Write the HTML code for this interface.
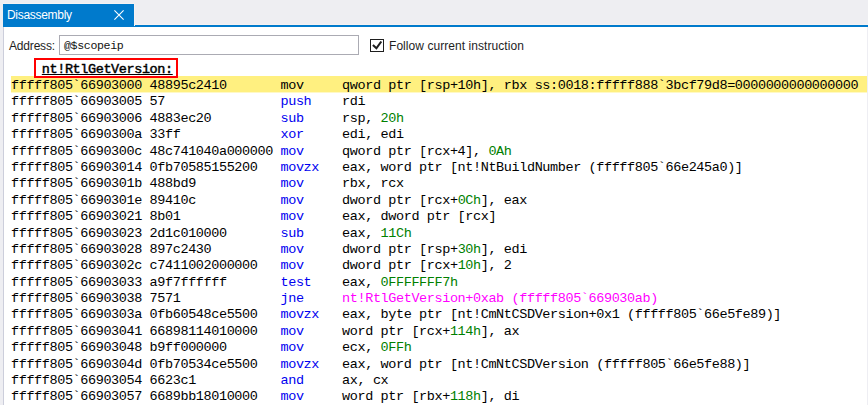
<!DOCTYPE html>
<html lang="en">
<head>
<meta charset="utf-8">
<title>Disassembly</title>
<style>
html,body{margin:0;padding:0;}
body{width:868px;height:405px;overflow:hidden;background:#eeeef2;position:relative;font-family:"Liberation Sans",sans-serif;font-size:12px;color:#1e1e1e;font-variant-ligatures:none;}
.tab{position:absolute;left:3px;top:4px;width:131px;height:22px;background:#007acc;color:#fff;z-index:2;box-shadow:1px 0 0 #f5f2f3,0 -1px 0 #f5f2f3;}
.tab .t{position:absolute;left:4px;top:4px;font-size:12px;line-height:14px;white-space:nowrap;letter-spacing:-0.3px;}
.tab svg{position:absolute;left:111px;top:6px;}
.bar{position:absolute;left:3px;top:25px;width:865px;height:2px;background:#007acc;box-shadow:0 -1px 0 #f5f2f3;}
.panel{position:absolute;left:3px;top:27px;width:865px;height:378px;background:#fff;border-left:1px solid #cccedb;border-right:1px solid #eeeef3;box-sizing:border-box;}
.lbl{position:absolute;left:9px;top:39px;line-height:14px;white-space:nowrap;letter-spacing:-0.18px;}
.inp{position:absolute;left:59px;top:35px;width:300px;height:20px;box-sizing:border-box;border:1px solid #ababb3;background:#fff;}
.inp span{position:absolute;left:4px;top:3px;font-family:"Liberation Mono",monospace;font-size:11.6px;letter-spacing:-0.36px;line-height:14px;white-space:pre;color:#111;}
.cb{position:absolute;left:370px;top:39px;width:14px;height:13px;box-sizing:border-box;border:1px solid #1e1e1e;background:#fff;}
.cb svg{position:absolute;left:0;top:0;}
.fol{position:absolute;left:389px;top:39px;line-height:14px;white-space:nowrap;letter-spacing:0.06px;}
.code{font-family:"Liberation Mono",monospace;font-size:13.5px;letter-spacing:-0.4px;white-space:pre;color:#000;}
.sym{position:absolute;left:41.8px;top:61.6px;height:16.39px;line-height:16.39px;font-weight:normal;-webkit-text-stroke:0.45px #000;text-decoration:underline;text-decoration-thickness:1.4px;}
.red{position:absolute;left:34px;top:58px;width:144px;height:19.6px;box-sizing:border-box;border:2px solid #f00;z-index:5;}
.r{position:absolute;left:11px;width:856px;height:16.39px;line-height:16.39px;font-family:"Liberation Mono",monospace;font-size:13.5px;letter-spacing:-0.4px;white-space:pre;color:#000;}
.r.cur{height:17px;background:linear-gradient(#fff080 0,#fff080 16px,#fff9c6 16px,#fff9c6 17px);}
.r span{position:absolute;top:2px;}
.r .a{left:0;}
.r .m{left:269.5px;color:#0000f0;}
.r .o{left:331.1px;}
.r .o span{position:static;}
.r.cur .m{color:#000;}
.n{color:#008000;}
.j{color:#ff00ff;}
</style>
</head>
<body>
<div class="tab"><span class="t">Disassembly</span><svg width="10" height="10" viewBox="0 0 10 10"><path d="M0.4 0.4L9.6 9.6M9.6 0.4L0.4 9.6" stroke="#fff" stroke-width="1.1" fill="none"/></svg></div>
<div class="bar"></div>
<div class="panel"></div>
<div class="lbl">Address:</div>
<div class="inp"><span>@$scopeip</span></div>
<div class="cb"><svg width="12" height="11" viewBox="0 0 12 11"><path d="M1.9 5.1L5.4 8.3L10.3 1.5" stroke="#1e1e1e" stroke-width="2.1" fill="none"/></svg></div>
<div class="fol">Follow current instruction</div>
<div class="code sym">nt!RtlGetVersion:</div>
<div class="red"></div>
<div class="r cur" style="top:76.00px"><span class="a">fffff805`66903000 48895c2410</span><span class="m">mov</span><span class="o">qword ptr [rsp+10h], rbx ss:0018:fffff888`3bcf79d8=0000000000000000</span></div>
<div class="r" style="top:92.39px"><span class="a">fffff805`66903005 57</span><span class="m">push</span><span class="o">rdi</span></div>
<div class="r" style="top:108.78px"><span class="a">fffff805`66903006 4883ec20</span><span class="m">sub</span><span class="o">rsp, <span class="n">20h</span></span></div>
<div class="r" style="top:125.17px"><span class="a">fffff805`6690300a 33ff</span><span class="m">xor</span><span class="o">edi, edi</span></div>
<div class="r" style="top:141.56px"><span class="a">fffff805`6690300c 48c741040a000000</span><span class="m">mov</span><span class="o">qword ptr [rcx+4], <span class="n">0Ah</span></span></div>
<div class="r" style="top:157.95px"><span class="a">fffff805`66903014 0fb70585155200</span><span class="m">movzx</span><span class="o">eax, word ptr [nt!NtBuildNumber (fffff805`66e245a0)]</span></div>
<div class="r" style="top:174.34px"><span class="a">fffff805`6690301b 488bd9</span><span class="m">mov</span><span class="o">rbx, rcx</span></div>
<div class="r" style="top:190.73px"><span class="a">fffff805`6690301e 89410c</span><span class="m">mov</span><span class="o">dword ptr [rcx+<span class="n">0Ch</span>], eax</span></div>
<div class="r" style="top:207.12px"><span class="a">fffff805`66903021 8b01</span><span class="m">mov</span><span class="o">eax, dword ptr [rcx]</span></div>
<div class="r" style="top:223.51px"><span class="a">fffff805`66903023 2d1c010000</span><span class="m">sub</span><span class="o">eax, <span class="n">11Ch</span></span></div>
<div class="r" style="top:239.90px"><span class="a">fffff805`66903028 897c2430</span><span class="m">mov</span><span class="o">dword ptr [rsp+<span class="n">30h</span>], edi</span></div>
<div class="r" style="top:256.29px"><span class="a">fffff805`6690302c c7411002000000</span><span class="m">mov</span><span class="o">dword ptr [rcx+<span class="n">10h</span>], 2</span></div>
<div class="r" style="top:272.68px"><span class="a">fffff805`66903033 a9f7ffffff</span><span class="m">test</span><span class="o">eax, <span class="n">0FFFFFFF7h</span></span></div>
<div class="r" style="top:289.07px"><span class="a">fffff805`66903038 7571</span><span class="m">jne</span><span class="o"><span class="j">nt!RtlGetVersion+0xab (fffff805`669030ab)</span></span></div>
<div class="r" style="top:305.46px"><span class="a">fffff805`6690303a 0fb60548ce5500</span><span class="m">movzx</span><span class="o">eax, byte ptr [nt!CmNtCSDVersion+0x1 (fffff805`66e5fe89)]</span></div>
<div class="r" style="top:321.85px"><span class="a">fffff805`66903041 66898114010000</span><span class="m">mov</span><span class="o">word ptr [rcx+<span class="n">114h</span>], ax</span></div>
<div class="r" style="top:338.24px"><span class="a">fffff805`66903048 b9ff000000</span><span class="m">mov</span><span class="o">ecx, <span class="n">0FFh</span></span></div>
<div class="r" style="top:354.63px"><span class="a">fffff805`6690304d 0fb70534ce5500</span><span class="m">movzx</span><span class="o">eax, word ptr [nt!CmNtCSDVersion (fffff805`66e5fe88)]</span></div>
<div class="r" style="top:371.02px"><span class="a">fffff805`66903054 6623c1</span><span class="m">and</span><span class="o">ax, cx</span></div>
<div class="r" style="top:387.41px"><span class="a">fffff805`66903057 6689bb18010000</span><span class="m">mov</span><span class="o">word ptr [rbx+<span class="n">118h</span>], di</span></div>

</body>
</html>
